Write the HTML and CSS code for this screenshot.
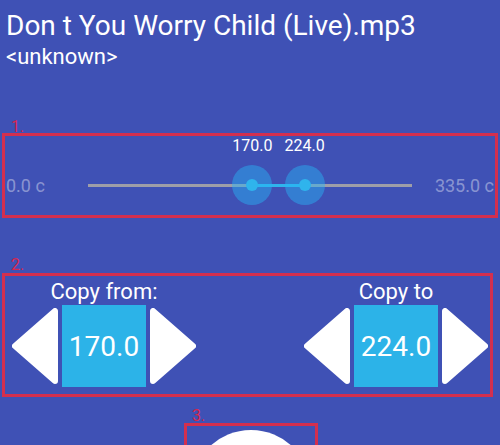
FILE: index.html
```html
<!DOCTYPE html>
<html>
<head>
<meta charset="utf-8">
<link rel="stylesheet" href="styles.css">
</head>
<body>
<header class="head">
  <div class="title">Don t You Worry Child (Live).mp3</div>
  <div class="artist">&lt;unknown&gt;</div>
</header>

<div class="tag tag-1">1.</div>
<section class="box slider-box">
  <span class="end">0.0 c</span>
  <div class="track">
    <div class="range" style="left:50.75%;width:16.12%"></div>
    <div class="thumb" style="left:50.75%"><span class="val">170.0</span></div>
    <div class="thumb" style="left:66.87%"><span class="val">224.0</span></div>
  </div>
  <span class="end end-max">335.0 c</span>
</section>

<div class="tag tag-2">2.</div>
<section class="box copy-box">
  <div class="copy">
    <div class="copy-label">Copy from:</div>
    <div class="stepper">
      <svg class="arrow" viewBox="0 0 46 76"><polygon points="3,38 43,3 43,73"/></svg>
      <div class="num">170.0</div>
      <svg class="arrow" viewBox="0 0 46 76"><polygon points="43,38 3,3 3,73"/></svg>
    </div>
  </div>
  <div class="copy">
    <div class="copy-label">Copy to</div>
    <div class="stepper">
      <svg class="arrow" viewBox="0 0 46 76"><polygon points="3,38 43,3 43,73"/></svg>
      <div class="num">224.0</div>
      <svg class="arrow" viewBox="0 0 46 76"><polygon points="43,38 3,3 3,73"/></svg>
    </div>
  </div>
</section>

<div class="tag tag-3">3.</div>
<section class="box play-box">
  <div class="play"></div>
</section>
</body>
</html>
```

FILE: styles.css
```css
html, body {
  margin: 0;
  height: 445px;
  overflow: hidden;
}
body {
  background: #3F51B5;
  font-family: Roboto, "Noto Sans", sans-serif;
  color: #fff;
}
.head {
  padding: 9px 0 0 6px;
}
.title {
  font-size: 28px;
  line-height: 33px;
}
.artist {
  font-size: 22px;
  line-height: 22px;
  margin-top: 3.5px;
}
.tag {
  color: #D8264E;
  font-size: 16px;
  line-height: 13px;
}
.tag-1 {
  margin: 52.5px 0 0 11px;
}
.box {
  border: 3px solid #D32F4F;
}
.slider-box {
  margin: 0 2px;
  height: 60px;
  padding: 19px 1px 0;
  display: grid;
  grid-template-columns: 82px 324px 1fr;
  align-items: center;
}
.end {
  font-size: 18px;
  color: rgba(255, 255, 255, 0.4);
}
.end-max {
  text-align: right;
}
.track {
  position: relative;
  height: 3px;
  background: #9E9EA8;
}
.range {
  position: absolute;
  top: 0;
  height: 3px;
  background: #2FB4EC;
}
.thumb {
  position: absolute;
  top: 50%;
  width: 40px;
  height: 40px;
  margin: -20px 0 0 -20px;
  border-radius: 50%;
  background: rgba(41, 182, 246, 0.45);
}
.thumb::after {
  content: "";
  position: absolute;
  left: 14px;
  top: 14px;
  width: 12px;
  height: 12px;
  border-radius: 50%;
  background: #2FB4EC;
}
.val {
  position: absolute;
  bottom: 50px;
  left: 50%;
  transform: translateX(-50%);
  font-size: 16px;
  line-height: 19px;
  white-space: nowrap;
}
.tag-2 {
  margin: 40.4px 0 1.6px 11px;
}
.copy-box {
  margin: 0 7px 0 2px;
  padding: 3.5px 2px 7px 7px;
  display: flex;
  justify-content: space-between;
}
.copy {
  display: flex;
  flex-direction: column;
  align-items: center;
}
.copy-label {
  font-size: 22px;
  line-height: 26px;
}
.stepper {
  display: flex;
  align-items: center;
  gap: 4px;
}
.arrow {
  display: block;
  width: 46px;
  height: 76px;
}
.arrow polygon {
  fill: #fff;
  stroke: #fff;
  stroke-width: 6;
  stroke-linejoin: round;
}
.num {
  width: 84px;
  height: 82px;
  background: #2CB3E8;
  display: flex;
  align-items: center;
  justify-content: center;
  font-size: 28px;
}
.tag-3 {
  margin: 11.4px 0 1.6px 192px;
}
.play-box {
  margin-left: 184px;
  width: 128px;
  height: 140px;
  padding-top: 4px;
  display: flex;
  justify-content: center;
}
.play {
  width: 120px;
  height: 120px;
  border-radius: 50%;
  background: #fff;
}
```
